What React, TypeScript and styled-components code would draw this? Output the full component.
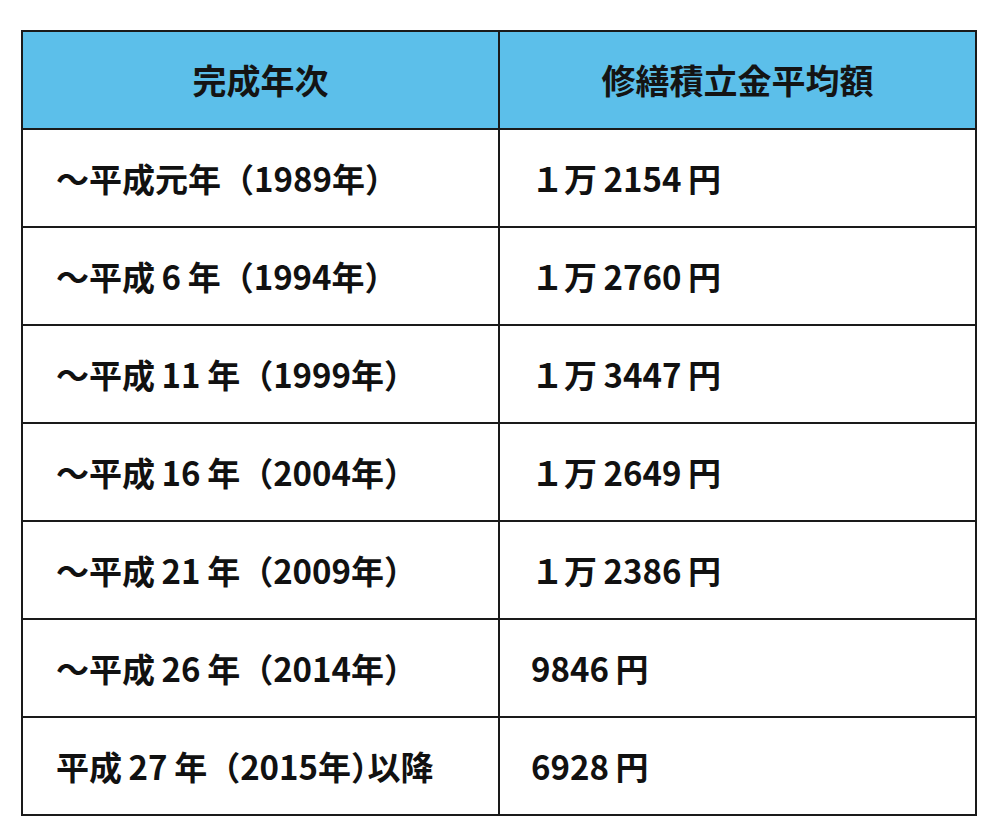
import * as React from "react";
import styled, { createGlobalStyle } from "styled-components";

const GlobalStyle = createGlobalStyle`
  html, body {
    margin: 0;
    padding: 0;
    background: #ffffff;
  }
  body {
    font-family: "Noto Sans CJK JP", "Noto Sans", sans-serif;
    color: #111111;
  }
`;

const Page = styled.div`
  width: 1000px;
  height: 839px;
  padding: 30px 0 0 21px;
  box-sizing: border-box;
`;

const Table = styled.table`
  width: 956px;
  border-collapse: collapse;
  table-layout: fixed;
  border: 2px solid #1a1a1a;
`;

const HeadCell = styled.th`
  height: 96px;
  padding: 0;
  background: #5cbfea;
  border: 2px solid #1a1a1a;
  font-size: 34px;
  font-weight: 700;
  text-align: center;
  vertical-align: middle;
  color: #141414;
  line-height: 1;
`;

const Cell = styled.td<{ $indent: number }>`
  height: 96px;
  padding: 0 0 0 ${(p) => p.$indent}px;
  border: 2px solid #1a1a1a;
  font-size: 33px;
  font-weight: 700;
  text-align: left;
  vertical-align: middle;
  white-space: nowrap;
  line-height: 1;
`;

const Gap = styled.span`
  display: inline-block;
  width: 0.2em;
`;

const Half = styled.span`
  font-feature-settings: "halt" 1;
`;

// "_" adds a narrow gap between kanji and digits,
// "^" sets the following punctuation mark at half width
const rows = [
  { year: "〜平成元年（1989年）", cost: "１万_2154_円" },
  { year: "〜平成_6_年（1994年）", cost: "１万_2760_円" },
  { year: "〜平成_11_年（1999年）", cost: "１万_3447_円" },
  { year: "〜平成_16_年（2004年）", cost: "１万_2649_円" },
  { year: "〜平成_21_年（2009年）", cost: "１万_2386_円" },
  { year: "〜平成_26_年（2014年）", cost: "9846_円" },
  { year: "平成_27_年（2015年^）以降", cost: "6928_円" },
];

const Spaced = ({ text }: { text: string }) => (
  <>
    {text.split("_").map((part, i) => (
      <React.Fragment key={i}>
        {i > 0 && <Gap />}
        {part.split("^").map((bit, j) =>
          j === 0 ? (
            <React.Fragment key={j}>{bit}</React.Fragment>
          ) : (
            <React.Fragment key={j}>
              <Half>{bit.slice(0, 1)}</Half>
              {bit.slice(1)}
            </React.Fragment>
          )
        )}
      </React.Fragment>
    ))}
  </>
);

export default function App() {
  return (
    <>
      <GlobalStyle />
      <Page>
        <Table>
          <colgroup>
            <col style={{ width: "477px" }} />
            <col style={{ width: "477px" }} />
          </colgroup>
          <thead>
            <tr>
              <HeadCell>完成年次</HeadCell>
              <HeadCell>修繕積立金平均額</HeadCell>
            </tr>
          </thead>
          <tbody>
            {rows.map((r) => (
              <tr key={r.year}>
                <Cell $indent={33}>
                  <Spaced text={r.year} />
                </Cell>
                <Cell $indent={31}>
                  <Spaced text={r.cost} />
                </Cell>
              </tr>
            ))}
          </tbody>
        </Table>
      </Page>
    </>
  );
}
